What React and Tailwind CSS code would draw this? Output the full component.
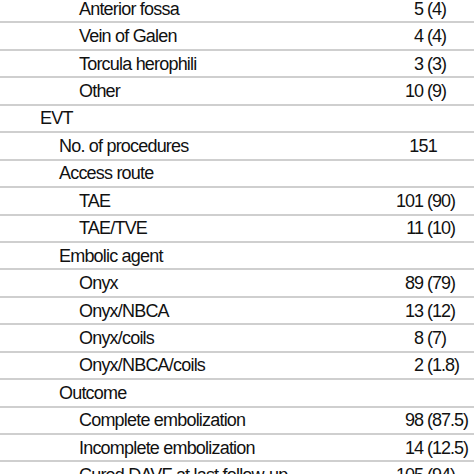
import React from 'react';

const rows = [
  { label: 'Anterior fossa', level: 3, num: '5', pct: '(4)' },
  { label: 'Vein of Galen', level: 3, num: '4', pct: '(4)' },
  { label: 'Torcula herophili', level: 3, num: '3', pct: '(3)' },
  { label: 'Other', level: 3, num: '10', pct: '(9)' },
  { label: 'EVT', level: 1 },
  { label: 'No. of procedures', level: 2, total: '151' },
  { label: 'Access route', level: 2 },
  { label: 'TAE', level: 3, num: '101', pct: '(90)' },
  { label: 'TAE/TVE', level: 3, num: '11', pct: '(10)' },
  { label: 'Embolic agent', level: 2 },
  { label: 'Onyx', level: 3, num: '89', pct: '(79)' },
  { label: 'Onyx/NBCA', level: 3, num: '13', pct: '(12)' },
  { label: 'Onyx/coils', level: 3, num: '8', pct: '(7)' },
  { label: 'Onyx/NBCA/coils', level: 3, num: '2', pct: '(1.8)' },
  { label: 'Outcome', level: 2 },
  { label: 'Complete embolization', level: 3, num: '98', pct: '(87.5)' },
  { label: 'Incomplete embolization', level: 3, num: '14', pct: '(12.5)' },
  { label: 'Cured DAVF at last follow-up', level: 3, num: '105', pct: '(94)' },
];

const indent = {
  1: 'pl-[40px]',
  2: 'pl-[59px]',
  3: 'pl-[79px]',
};

const Row = ({ row }) => (
  <div className="flex items-center h-[27.44px] border-b-2 border-[#cfcfcf] box-border">
    <div className={`w-[380px] shrink-0 whitespace-nowrap ${indent[row.level]}`}>{row.label}</div>
    {row.total ? (
      <div className="w-[57px] text-right">{row.total}</div>
    ) : (
      <>
        <div className="w-[43px] text-right tracking-[-1px]">{row.num}</div>
        <div className="pl-[4px] whitespace-nowrap tracking-[-1px]">{row.pct}</div>
      </>
    )}
  </div>
);

const App = () => {
  return (
    <div className="w-[474px] h-[474px] overflow-hidden bg-white">
      <div
        className="-mt-[4px] text-[18px] leading-none tracking-[-0.8px] text-[#111]"
        style={{ fontFamily: '"Liberation Sans", Arial, sans-serif' }}
      >
        {rows.map((row) => (
          <Row key={row.label} row={row} />
        ))}
      </div>
    </div>
  );
};

export default App;
